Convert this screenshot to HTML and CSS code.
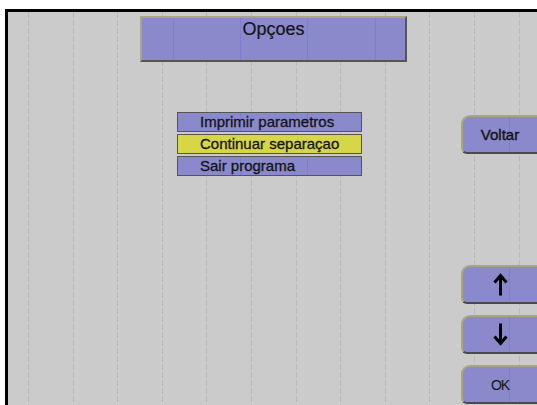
FILE: index.html
```html
<!DOCTYPE html>
<html lang="pt">
<head>
    <meta charset="UTF-8">
    <meta name="viewport" content="width=device-width, initial-scale=1.0">
    <title>Opçoes</title>
    <link rel="stylesheet" href="styles.css">
</head>
<body>
    <div class="screen">
        <div class="grid">
            <span></span><span></span><span></span><span></span>
            <span></span><span></span><span></span><span></span>
            <span></span><span></span><span></span><span></span>
        </div>

        <div class="main">
            <div class="title purple">Opçoes</div>

            <ul class="menu">
                <li class="item purple">Imprimir parametros</li>
                <li class="item selected">Continuar separaçao</li>
                <li class="item purple">Sair programa</li>
            </ul>
        </div>

        <div class="side">
            <button class="key purple">Voltar</button>

            <div class="keys">
                <button class="key purple">
                    <svg width="15" height="23" viewBox="0 0 15 23">
                        <path d="M7.5 22.5V3 M1.5 9.5L7.5 2.5L13.5 9.5" fill="none" stroke="#000" stroke-width="3"/>
                    </svg>
                </button>
                <button class="key purple">
                    <svg width="15" height="23" viewBox="0 0 15 23">
                        <path d="M7.5 0.5V20 M1.5 13.5L7.5 20.5L13.5 13.5" fill="none" stroke="#000" stroke-width="3"/>
                    </svg>
                </button>
                <button class="key key-ok purple">OK</button>
            </div>
        </div>
    </div>
</body>
</html>
```

FILE: styles.css
```css
body {
    margin: 0;
    background-color: #fff;
    font-family: "Liberation Sans", Arial, sans-serif;
    color: #141414;
}

.screen {
    position: relative;
    display: flex;
    margin: 9px 0 0 5px;
    height: 393px;
    border-top: 3px solid #000;
    border-left: 3px solid #000;
    background-color: #cbcbcb;
    overflow: hidden;
}

/* dashed guide lines behind everything */
.grid {
    position: absolute;
    top: 0;
    bottom: 0;
    left: 0;
    right: 0;
    display: flex;
    padding-left: 20px;
}

.grid span {
    flex: none;
    width: 44.6px;
    background: linear-gradient(#b9b9b9 0 70%, transparent 70%) left top / 1px 8px repeat-y;
}

.purple {
    background-color: #8989cc;
    background-image: repeating-linear-gradient(90deg, transparent 0 38px, #7d7dd2 38px 39px, transparent 39px 67.3px);
    background-attachment: fixed;
}

.main {
    position: relative;
    flex: 1;
    padding: 4px 0 0 132px;
}

.title {
    box-sizing: border-box;
    width: 267px;
    height: 46px;
    padding-top: 1px;
    border: 2px solid;
    border-color: #a7a685 #555 #555 #a7a685;
    font-size: 18px;
    line-height: 20px;
    text-align: center;
    -webkit-text-stroke: 0.2px #141414;
}

.menu {
    list-style: none;
    margin: 50px 0 0 37px;
    padding: 0;
    width: 185px;
}

.item {
    box-sizing: border-box;
    height: 20px;
    margin-bottom: 2px;
    padding-left: 22px;
    border: 1px solid #555;
    font-size: 15px;
    line-height: 18px;
    -webkit-text-stroke: 0.3px #141414;
}

.selected {
    background-color: #d6d646;
}

.side {
    position: relative;
    flex: none;
    width: 76px;
    padding-top: 103px;
}

.keys {
    margin-top: 111px;
}

.key {
    display: flex;
    align-items: center;
    justify-content: center;
    box-sizing: border-box;
    width: 100%;
    height: 39px;
    margin-bottom: 11px;
    padding: 0;
    border-style: solid;
    border-width: 2px 0 2px 2px;
    border-color: #a9a57d #000 #4a4a4a #a9a57d;
    border-radius: 9px 0 0 6px;
    font-family: inherit;
    font-size: 15px;
    color: #141414;
    -webkit-text-stroke: 0.4px #141414;
}

.key-ok {
    font-size: 14px;
    letter-spacing: -1px;
    -webkit-text-stroke: 0;
}
```
